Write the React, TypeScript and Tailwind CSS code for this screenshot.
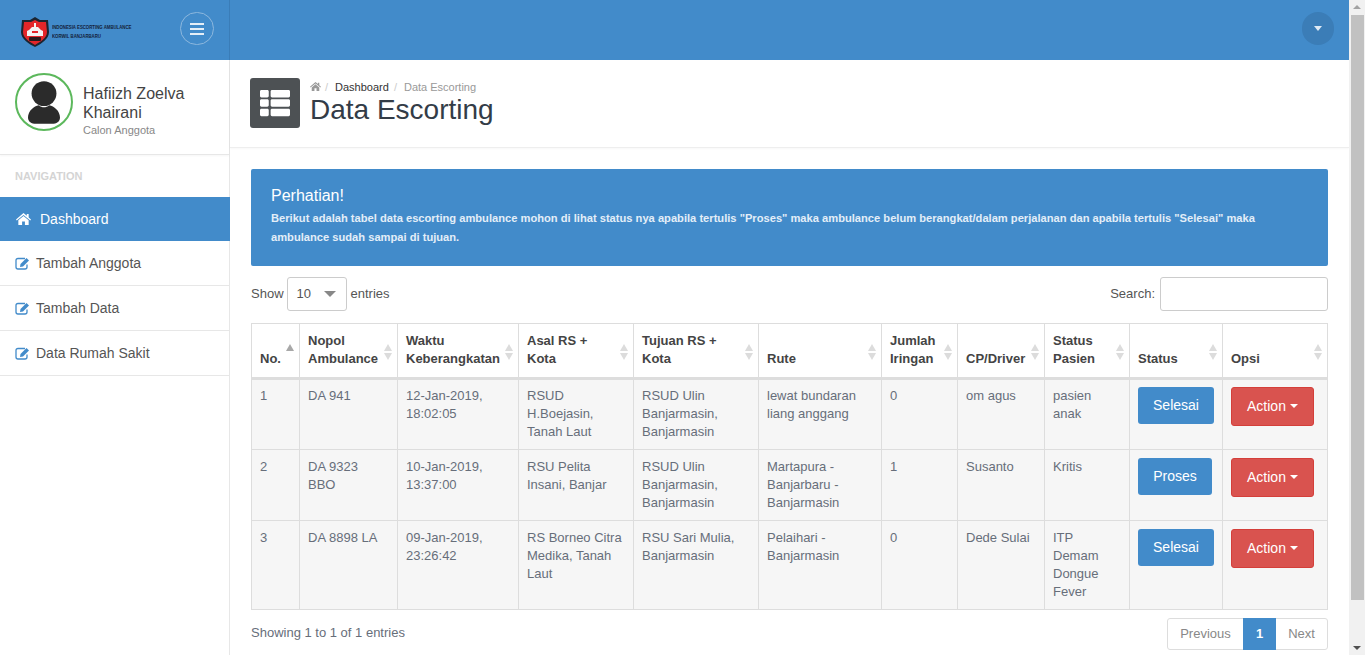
import { FaThList } from 'react-icons/fa';

const rows = [
    { no: '1', nopol: ['DA 941'], waktu: ['12-Jan-2019,', '18:02:05'], asal: ['RSUD', 'H.Boejasin,', 'Tanah Laut'], tujuan: ['RSUD Ulin', 'Banjarmasin,', 'Banjarmasin'], rute: ['lewat bundaran', 'liang anggang'], jumlah: '0', cp: 'om agus', pasien: ['pasien', 'anak'], status: 'Selesai', statusW: 'w-[76px]', h: 'h-[71px]', cell: 'border border-[#ddd] px-[8px] pt-[7px] align-top' },
    { no: '2', nopol: ['DA 9323', 'BBO'], waktu: ['10-Jan-2019,', '13:37:00'], asal: ['RSU Pelita', 'Insani, Banjar'], tujuan: ['RSUD Ulin', 'Banjarmasin,', 'Banjarmasin'], rute: ['Martapura -', 'Banjarbaru -', 'Banjarmasin'], jumlah: '1', cp: 'Susanto', pasien: ['Kritis'], status: 'Proses', statusW: 'w-[74px]', h: 'h-[71px]', cell: 'border border-[#ddd] px-[8px] pt-[8px] align-top' },
    { no: '3', nopol: ['DA 8898 LA'], waktu: ['09-Jan-2019,', '23:26:42'], asal: ['RS Borneo Citra', 'Medika, Tanah', 'Laut'], tujuan: ['RSU Sari Mulia,', 'Banjarmasin'], rute: ['Pelaihari -', 'Banjarmasin'], jumlah: '0', cp: 'Dede Sulai', pasien: ['ITP', 'Demam', 'Dongue', 'Fever'], status: 'Selesai', statusW: 'w-[76px]', h: 'h-[89px]', cell: 'border border-[#ddd] px-[8px] pt-[8px] align-top' },
];

const columns = [
    { w: 'w-[48px]', label: ['No.'], active: true },
    { w: 'w-[98px]', label: ['Nopol', 'Ambulance'] },
    { w: 'w-[121px]', label: ['Waktu', 'Keberangkatan'] },
    { w: 'w-[115px]', label: ['Asal RS +', 'Kota'] },
    { w: 'w-[125px]', label: ['Tujuan RS +', 'Kota'] },
    { w: 'w-[123px]', label: ['Rute'] },
    { w: 'w-[76px]', label: ['Jumlah', 'Iringan'] },
    { w: 'w-[87px]', label: ['CP/Driver'] },
    { w: 'w-[85px]', label: ['Status', 'Pasien'] },
    { w: 'w-[93px]', label: ['Status'] },
    { w: 'w-[105px]', label: ['Opsi'] },
];

function Lines({ items }: { items: string[] }) {
    return (
        <>
            {items.map(item => (
                <div key={item} className="whitespace-nowrap">{item}</div>
            ))}
        </>
    );
}

function SortArrows({ active }: { active?: boolean }) {
    return (
        <svg width="10" height="18" viewBox="0 0 10 18" className="absolute right-[4px] top-[19px]">
            <path d="M5 1 9 8H1z" fill={active ? '#a8a8a8' : '#dcdcdc'} />
            {!active && <path d="M5 17 9 10H1z" fill="#dcdcdc" />}
        </svg>
    );
}

function Logo() {
    return (
        <svg width="30" height="30" viewBox="0 0 30 30" className="shrink-0">
            <path d="M15 0 20 3 28 3 29 15C29 22 21 27 15 30 9 27 1 22 1 15L2 3 10 3Z" fill="#1c2530" />
            <path d="M15 3 19 5 26 5 27 15C27 21 20 25 15 28 10 25 3 21 3 15L4 5 11 5Z" fill="#e3262a" />
            <rect x="14" y="6" width="2" height="4" fill="#f3f3f3" />
            <path d="M9 13 12 10H18L21 13 23 14V19H7V14Z" fill="#f3f3f3" />
            <rect x="12" y="14" width="6" height="2" fill="#e3262a" />
            <rect x="9" y="20" width="12" height="4" rx="1" fill="#2a1a1c" />
        </svg>
    );
}

function EditIcon() {
    return (
        <svg width="15" height="13" viewBox="0 0 15 13" className="mr-[6px] shrink-0">
            <path d="M10 1.5H3Q1 1.5 1 3.5V10Q1 12 3 12H10Q12 12 12 10V7.5" fill="none" stroke="#428bca" strokeWidth="1.3" />
            <path d="M11.5 1 14 3.5 8 9.5 5 10 5.5 7Z" fill="#428bca" />
        </svg>
    );
}

function HomeIcon({ size, color }: { size: number; color: string }) {
    return (
        <svg width={size} height={size * 0.82} viewBox="0 0 16 13" className="shrink-0">
            <path d="M8 0 11.5 3V1H13.5V4.7L16 7 15.2 8 8 2 .8 8 0 7Z" fill={color} />
            <path d="M8 3.2 13.5 7.8V13H9.5V9H6.5V13H2.5V7.8Z" fill={color} />
        </svg>
    );
}

function NavItem({ label }: { label: string }) {
    return (
        <div className="flex items-center h-[45px] border-b border-[#e7e7e7] pl-[15px] text-[#555] text-[14px]">
            <EditIcon />
            <span>{label}</span>
        </div>
    );
}

export default function App() {
    return (
        <div className="flex h-[655px] w-[1365px] overflow-hidden bg-white font-['Liberation_Sans',Arial,sans-serif]">
            <div className="w-[1349px] flex flex-col">
                {/* top bar */}
                <div className="h-[60px] flex bg-[#428bca] shrink-0">
                    <div className="w-[230px] border-r border-[#3a7db8] flex items-center pl-[20px] pr-[15px]">
                        <div className="flex items-center mt-[3px]">
                            <Logo />
                            <div className="ml-[2px] text-[#14213a] text-[5.4px] leading-[9px] font-bold whitespace-nowrap origin-left scale-x-[0.8] w-[80px]">
                                <div>INDONESIA ESCORTING AMBULANCE</div>
                                <div>KORWIL BANJARBARU</div>
                            </div>
                        </div>
                        <div className="ml-auto -mt-[3px] w-[34px] h-[33px] rounded-full border border-[#8db8de] flex flex-col gap-[3px] items-center justify-center">
                            <div className="w-[14px] h-[2px] bg-[#e4eef7]" />
                            <div className="w-[14px] h-[2px] bg-[#e4eef7]" />
                            <div className="w-[14px] h-[2px] bg-[#e4eef7]" />
                        </div>
                    </div>
                    <div className="flex-1 flex items-center justify-end pr-[15px] pb-[3px]">
                        <div className="w-[32px] h-[33px] rounded-full bg-[#3b7db7] flex items-center justify-center">
                            <svg width="10" height="6" viewBox="0 0 10 6"><path d="M1 0H9L5 5Z" fill="#dfeaf5" /></svg>
                        </div>
                    </div>
                </div>

                <div className="flex flex-1 min-h-0">
                    {/* sidebar */}
                    <div className="w-[230px] border-r border-[#e7e7e7] shrink-0">
                        <div className="h-[95px] flex items-start pt-[13px] pl-[15px] border-b border-[#e7e7e7] shadow-[0_1px_2px_rgba(0,0,0,0.04)]">
                            <div className="w-[58px] h-[58px] rounded-full border-2 border-[#5cb85c] flex items-center justify-center shrink-0">
                                <svg width="32" height="43" viewBox="0 0 36 48">
                                    <circle cx="18" cy="14" r="14" fill="#2b2b2b" />
                                    <path d="M0 41C0 33 7 28 12 27 16 30 20 30 24 27 29 28 36 33 36 41 36 46 32 48 27 48H9C4 48 0 46 0 41Z" fill="#2b2b2b" />
                                </svg>
                            </div>
                            <div className="ml-[10px] mt-[11px]">
                                <div className="text-[16px] leading-[19px] text-[#444]">Hafiizh Zoelva<br />Khairani</div>
                                <div className="text-[11px] leading-[14px] mt-[1px] text-[#888]">Calon Anggota</div>
                            </div>
                        </div>
                        <div className="h-[42px] pl-[15px] pt-[15px] text-[11px] leading-[13px] font-bold text-[#d4d4d4]">NAVIGATION</div>
                        <div className="flex items-center h-[44px] -mr-px relative bg-[#428bca] pl-[16px] text-white text-[14px]">
                            <span className="mr-[9px]"><HomeIcon size={15} color="#ffffff" /></span>
                            <span>Dashboard</span>
                        </div>
                        <NavItem label="Tambah Anggota" />
                        <NavItem label="Tambah Data" />
                        <NavItem label="Data Rumah Sakit" />
                    </div>

                    {/* content */}
                    <div className="flex-1 min-w-0">
                        <div className="h-[88px] pb-[2px] flex items-center pl-[20px] border-b border-[#eee] shadow-[0_1px_2px_rgba(0,0,0,0.03)]">
                            <div className="w-[50px] h-[50px] rounded-[3px] bg-[#4d5154] flex items-center justify-center">
                                <FaThList className="text-white text-[30px]" />
                            </div>
                            <div className="ml-[10px]">
                                <div className="flex items-center text-[11px] leading-[14px] text-[#999]">
                                    <HomeIcon size={11} color="#999999" />
                                    <span className="ml-[4px] mr-[7px] text-[#ccc]">/</span>
                                    <span className="text-[#333]">Dashboard</span>
                                    <span className="ml-[5px] mr-[7px] text-[#ccc]">/</span>
                                    <span>Data Escorting</span>
                                </div>
                                <div className="text-[28px] leading-[30px] text-[#333c47] mt-[1px]">Data Escorting</div>
                            </div>
                        </div>

                        <div className="pl-[21px] pr-[21px] pt-[21px]">
                            <div className="h-[97px] bg-[#428bca] rounded-[2px] px-[20px] pt-[18px] text-white">
                                <div className="text-[16px] leading-[18px]">Perhatian!</div>
                                <div className="text-[11.15px] leading-[19px] font-bold text-[#e3eef8] mt-[4px]">
                                    Berikut adalah tabel data escorting ambulance mohon di lihat status nya apabila tertulis "Proses" maka ambulance belum berangkat/dalam perjalanan dan apabila tertulis "Selesai" maka ambulance sudah sampai di tujuan.
                                </div>
                            </div>

                            <div className="flex items-center justify-between mt-[11px] h-[34px] text-[13px] text-[#555]">
                                <div className="flex items-center">
                                    <span>Show</span>
                                    <div className="w-[60px] h-[34px] ml-[3px] mr-[4px] border border-[#ccc] rounded-[3px] flex items-center justify-between pl-[9px] pr-[10px] text-[#555]">
                                        <span>10</span>
                                        <svg width="12" height="6" viewBox="0 0 12 6"><path d="M0 0H12L6 6Z" fill="#888888" /></svg>
                                    </div>
                                    <span>entries</span>
                                </div>
                                <div className="flex items-center">
                                    <span>Search:</span>
                                    <div className="w-[168px] h-[34px] ml-[5px] border border-[#ccc] rounded-[3px]" />
                                </div>
                            </div>

                            <table className="mt-[12px] w-[1077px] table-fixed border-collapse border border-[#ddd] text-[13px] leading-[18px] text-[#676e7a]">
                                <colgroup>
                                    {columns.map(col => (
                                        <col key={col.label.join(' ')} className={col.w} />
                                    ))}
                                </colgroup>
                                <thead>
                                    <tr className="h-[55px]">
                                        {columns.map(col => (
                                            <th key={col.label.join(' ')} className="relative border border-[#ddd] border-b-[3px] px-[8px] pb-[9px] align-bottom text-left font-bold text-[#444]">
                                                <Lines items={col.label} />
                                                <SortArrows active={col.active} />
                                            </th>
                                        ))}
                                    </tr>
                                </thead>
                                <tbody>
                                    {rows.map(row => (
                                        <tr key={row.no} className={`${row.h} bg-[#f6f6f6]`}>
                                            <td className={row.cell}>{row.no}</td>
                                            <td className={row.cell}><Lines items={row.nopol} /></td>
                                            <td className={row.cell}><Lines items={row.waktu} /></td>
                                            <td className={row.cell}><Lines items={row.asal} /></td>
                                            <td className={row.cell}><Lines items={row.tujuan} /></td>
                                            <td className={row.cell}><Lines items={row.rute} /></td>
                                            <td className={row.cell}>{row.jumlah}</td>
                                            <td className={row.cell}>{row.cp}</td>
                                            <td className={row.cell}><Lines items={row.pasien} /></td>
                                            <td className={row.cell}>
                                                <div className={`${row.statusW} h-[37px] rounded-[3px] bg-[#428bca] text-white text-[14px] flex items-center justify-center pb-[2px]`}>{row.status}</div>
                                            </td>
                                            <td className={row.cell}>
                                                <div className="w-[83px] h-[39px] rounded-[3px] bg-[#d9534f] border border-[#d43f3a] text-white text-[14px] flex items-center justify-center pb-[1px]">
                                                    Action
                                                    <svg width="8" height="4" viewBox="0 0 8 4" className="ml-[4px]"><path d="M0 0H8L4 4Z" fill="#ffffff" /></svg>
                                                </div>
                                            </td>
                                        </tr>
                                    ))}
                                </tbody>
                            </table>

                            <div className="flex items-start justify-between mt-[8px] text-[13px] leading-[18px] text-[#676e7a]">
                                <span className="mt-[6px]">Showing 1 to 1 of 1 entries</span>
                                <div className="flex h-[32px] border border-[#ddd] rounded-[3px] text-[#888]">
                                    <span className="w-[75px] flex items-center justify-center">Previous</span>
                                    <span className="w-[33px] -my-[1px] flex items-center justify-center bg-[#428bca] text-white font-bold">1</span>
                                    <span className="w-[51px] flex items-center justify-center">Next</span>
                                </div>
                            </div>
                        </div>
                    </div>
                </div>
            </div>

            {/* window scrollbar */}
            <div className="w-[16px] h-[655px] bg-[#f1f1f1] flex flex-col items-center shrink-0">
                <svg width="16" height="15" viewBox="0 0 16 15" className="shrink-0"><path d="M8 5 12 9H4z" fill="#a3a3a3" /></svg>
                <div className="w-[13px] h-[585px] bg-[#c1c1c1]" />
                <div className="flex-1" />
                <svg width="16" height="15" viewBox="0 0 16 15" className="shrink-0"><path d="M8 10 12 6H4z" fill="#505050" /></svg>
            </div>
        </div>
    );
}
